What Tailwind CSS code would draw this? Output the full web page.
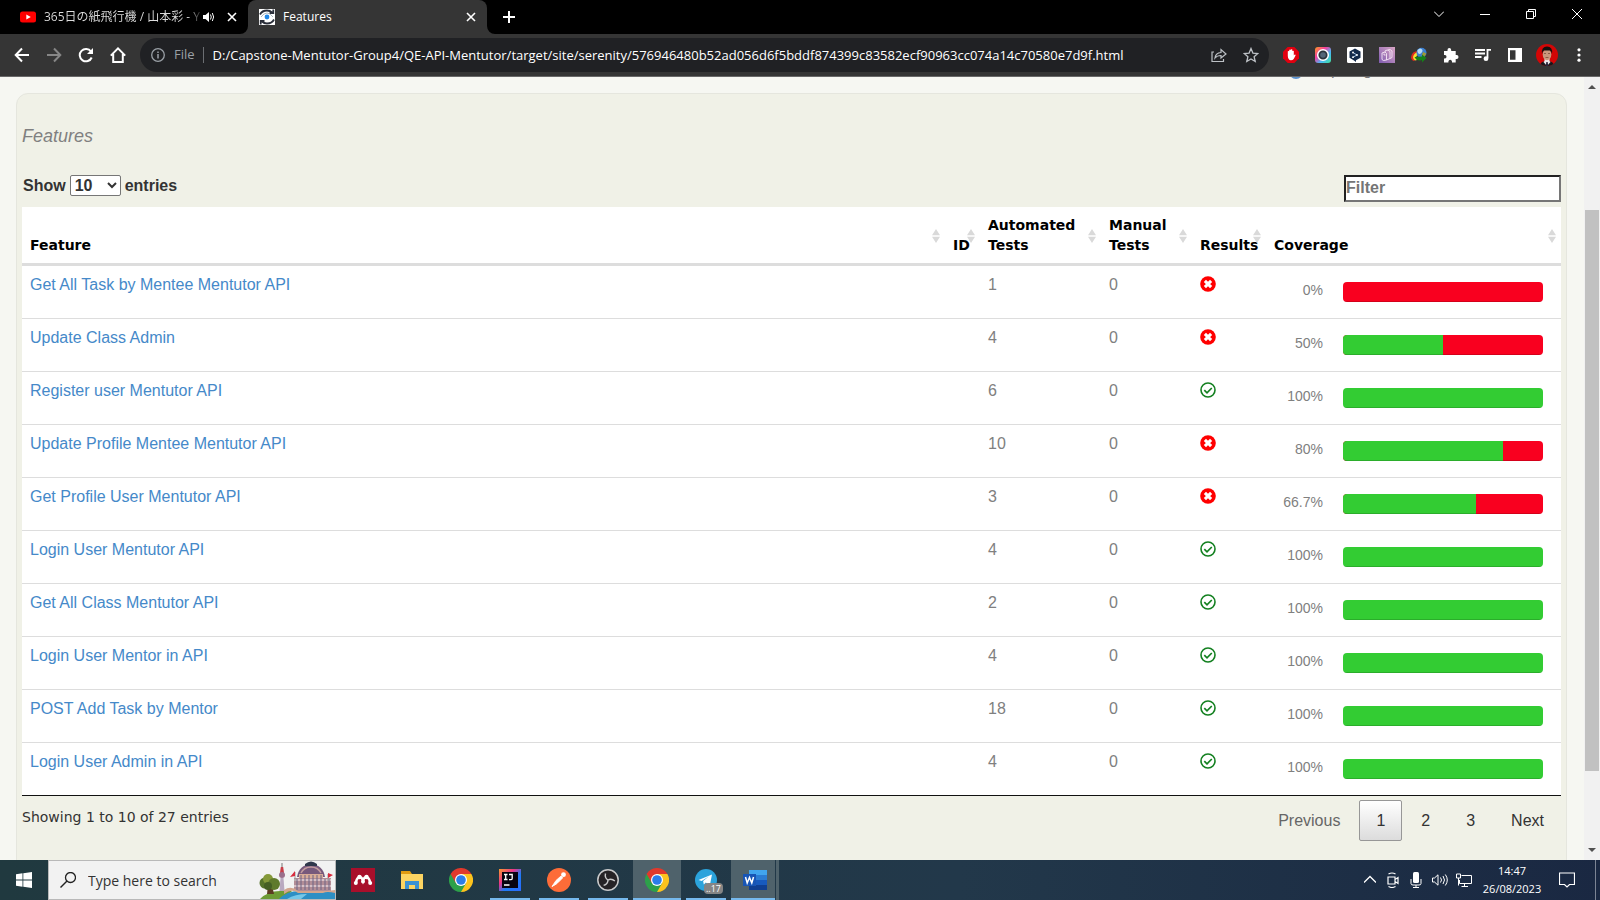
<!DOCTYPE html>
<html lang="en">
<head>
<meta charset="utf-8">
<title>Features</title>
<script src="https://cdn.jsdelivr.net/npm/@tailwindcss/browser@4"></script>
</head>
<body class="flex h-screen flex-col overflow-hidden bg-black font-['Open_Sans','Noto_Sans_CJK_JP',sans-serif]">

<svg class="hidden">
  <defs>
    <symbol id="fail" viewBox="0 0 16 16"><circle cx="8" cy="8" r="7.800" fill="#f00"/><path d="M4.900 4.900l6.200 6.200M11.100 4.900l-6.200 6.200" stroke="#fff" stroke-width="3.100"/></symbol>
    <symbol id="pass" viewBox="0 0 16 16"><circle cx="8" cy="8" r="7" fill="none" stroke="#138020" stroke-width="1.600"/><path d="M4.300 8.200l2.700 2.600 4.800-4.800" fill="none" stroke="#138020" stroke-width="1.700"/></symbol>
    <symbol id="sort" viewBox="0 0 8 14"><path d="M4 0l4 6.300H0zM4 14l4-6.300H0z" fill="#d9d9d9"/></symbol>
    <symbol id="close" viewBox="0 0 10 10"><path d="M1 1l8 8M9 1L1 9" stroke="currentColor" stroke-width="1.600" fill="none"/></symbol>
    <symbol id="chrome" viewBox="0 0 24 24">
      <path d="M12 24a12 12 0 0 0 10.400-18H12z" fill="#fcc31e"/>
      <path d="M17.200 15L12 24A12 12 0 0 1 1.600 6z" fill="#2da04a"/>
      <path d="M12 6H22.400A12 12 0 0 0 1.600 6l5.200 9z" fill="#e0392c"/>
      <circle cx="12" cy="12" r="6" fill="#fff"/><circle cx="12" cy="12" r="4.800" fill="#2b7de9"/>
    </symbol>
  </defs>
</svg>

<header class="shrink-0 text-white">
  <!-- Tab strip -->
  <div class="flex h-[34px] items-stretch bg-black text-xs">
    <div class="flex w-[248px] items-center bg-black pr-[11px] pl-5">
      <svg class="h-4 w-4 shrink-0" viewBox="0 0 16 16"><rect y="2.500" width="16" height="11" rx="2.500" fill="#f00"/><path d="M6.300 5.500v5L10.800 8z" fill="#fff"/></svg>
      <span class="ml-2 shrink-0 bg-linear-to-r from-[#dedede] from-92% to-[#333] bg-clip-text whitespace-nowrap text-transparent">365日の紙飛行機 / 山本彩 - Y</span>
      <svg class="mr-3 ml-auto h-3 w-3 shrink-0" viewBox="0 0 12 12"><path d="M0 4h2.500L6 1v10L2.500 8H0z" fill="#fff"/><path d="M7.500 3.500q1.500 2.500 0 5M9.300 2q2.600 4 0 8" stroke="#fff" fill="none"/></svg>
      <button aria-label="Close tab"><svg class="h-[10px] w-[10px]"><use href="#close"/></svg></button>
    </div>
    <div class="relative flex w-[239px] items-center rounded-t-lg bg-[#353535] pr-[11px] pl-[11px]">
      <svg class="absolute bottom-0 -left-2 h-2 w-2" viewBox="0 0 8 8"><path d="M8 0v8H0a8 8 0 0 0 8-8" fill="#353535"/></svg>
      <svg class="absolute -right-2 bottom-0 h-2 w-2" viewBox="0 0 8 8"><path d="M0 0v8h8a8 8 0 0 1-8-8" fill="#353535"/></svg>
      <svg class="h-4 w-4 shrink-0" viewBox="0 0 16 16"><path fill="#fff" d="M0 0h16v16H0z"/><path d="M1 5.500Q3 1.500 8 1.500q3 0 5 2M15 10.500Q13 14.500 8 14.500q-3 0-5-2M10.500 4h3.800V.5M5.500 12H1.700v3.500" fill="none" stroke="#2b2f3a" stroke-width="1.800"/><path d="M2 8q3-4 6-4t6 4" fill="none" stroke="#9aa4ad" stroke-width=".8"/><circle cx="8" cy="8" r="2.400" fill="#2389e8"/></svg>
      <span class="ml-2">Features</span>
      <button aria-label="Close tab" class="ml-auto"><svg class="h-[10px] w-[10px]"><use href="#close"/></svg></button>
    </div>
    <button aria-label="New tab" class="ml-4 flex items-center"><svg class="h-3 w-3" viewBox="0 0 12 12"><path d="M6 0v12M0 6h12" stroke="#fff" stroke-width="2"/></svg></button>
    <div class="ml-auto flex items-center gap-9 pr-[18px] pb-[6px]">
      <button aria-label="Search tabs"><svg class="h-[10px] w-[10px]" viewBox="0 0 10 10"><path d="M0 2.500l5 5 5-5" stroke="#fff" fill="none"/></svg></button>
      <button aria-label="Minimize"><svg class="h-[10px] w-[10px]" viewBox="0 0 10 10"><path d="M0 5.500h10" stroke="#fff"/></svg></button>
      <button aria-label="Restore"><svg class="h-[10px] w-[10px]" viewBox="0 0 10 10"><path d="M.5 2.500h7v7h-7zM2.500 2.500v-2h7v7h-2" stroke="#fff" fill="none"/></svg></button>
      <button aria-label="Close"><svg class="h-[10px] w-[10px]" viewBox="0 0 10 10"><path d="M0 0l10 10M10 0L0 10" stroke="#fff" fill="none"/></svg></button>
    </div>
  </div>

  <!-- Toolbar -->
  <div class="flex h-[43px] items-center border-b border-[#686868] bg-[#353535] pr-[13px] pl-[14px]">
    <div class="flex items-center gap-4">
      <button aria-label="Back"><svg class="h-4 w-4" viewBox="0 0 16 16"><path d="M15 8H2M8 1.500L1.700 8 8 14.500" stroke="#fff" stroke-width="2" fill="none"/></svg></button>
      <button aria-label="Forward"><svg class="h-4 w-4" viewBox="0 0 16 16"><path d="M1 8h13M8 1.500L14.300 8 8 14.500" stroke="#868686" stroke-width="2" fill="none"/></svg></button>
      <button aria-label="Reload"><svg class="h-4 w-4" viewBox="0 0 16 16"><path d="M13.700 10.500A6.200 6.200 0 1 1 13 4.500" stroke="#fff" stroke-width="2" fill="none"/><path d="M15 1v6H9z" fill="#fff"/></svg></button>
      <button aria-label="Home"><svg class="h-4 w-4" viewBox="0 0 16 16"><path d="M.8 8.600L8 1.400l7.200 7.200M3.200 7v8h9.600V7" stroke="#fff" stroke-width="2" fill="none"/></svg></button>
    </div>
    <div class="ml-[14px] flex h-[34px] min-w-0 flex-1 items-center rounded-full bg-[#202124] pr-[10px] pl-[11px] text-[13px]">
      <svg class="h-[14px] w-[14px] shrink-0" viewBox="0 0 14 14"><circle cx="7" cy="7" r="6.300" stroke="#9aa0a6" stroke-width="1.300" fill="none"/><path d="M7 6v4.500M7 3.500v1.500" stroke="#9aa0a6" stroke-width="1.500"/></svg>
      <span class="ml-[9px] text-[#9aa0a6]">File</span>
      <span class="ml-2 h-4 w-px bg-[#6b6e72]"></span>
      <input aria-label="Address" class="ml-[9px] min-w-0 flex-1 bg-transparent pt-px text-white outline-none" value="D:/Capstone-Mentutor-Group4/QE-API-Mentutor/target/site/serenity/576946480b52ad056d6f5bddf874399c83582ecf90963cc074a14c70580e7d9f.html">
      <button aria-label="Share" class="ml-2"><svg class="h-4 w-4" viewBox="0 0 16 16"><path d="M3 5H1v9.500h11.500V12M4 11q.5-5 6-5.500V2.500L15 7l-5 4V8.500Q6 8.500 4 11z" stroke="#bdc1c6" stroke-width="1.200" fill="none"/></svg></button>
      <button aria-label="Bookmark" class="ml-4"><svg class="h-4 w-4" viewBox="0 0 16 16"><path d="M8 1.500l1.900 4.600 4.900.4-3.700 3.200 1.100 4.800L8 12l-4.200 2.500 1.100-4.800L1.200 6.500l4.900-.4z" stroke="#bdc1c6" stroke-width="1.300" fill="none"/></svg></button>
    </div>
    <div class="ml-[14px] flex items-center gap-4">
      <svg class="h-4 w-4" viewBox="0 0 16 16"><path d="M4.700 0h6.600L16 4.700v6.600L11.300 16H4.700L0 11.300V4.700z" fill="#e2000f"/><path d="M4.800 9V4.300q.7-.8 1.400 0V3q.8-.8 1.600 0v-.4q.8-.7 1.500 0V4q.8-.7 1.500 0v4.500q.5-.8 1.300-.9.800.3.400 1-.8 1.700-1.800 3.400-.9 1.300-2.800 1.300Q5 13 4.800 9z" fill="#fff"/></svg>
      <svg class="h-4 w-4" viewBox="0 0 16 16"><defs><linearGradient id="cam" x1="0" y1="0" x2="1" y2="1"><stop offset="0" stop-color="#ff9d1c"/><stop offset=".35" stop-color="#f63da0"/><stop offset=".65" stop-color="#47b8f5"/><stop offset="1" stop-color="#42e69e"/></linearGradient></defs><rect width="16" height="16" rx="3" fill="url(#cam)"/><circle cx="8" cy="8" r="5.300" fill="#2c343e" stroke="#fff" stroke-width="1.500"/><circle cx="8" cy="8" r="2.800" fill="#536578"/></svg>
      <svg class="h-4 w-4" viewBox="0 0 16 16"><rect width="16" height="16" rx="1.500" fill="#fff"/><path d="M8 1.500l5.500 3v6.200L9 13.200V15l-2-1.500-4.500-2.800V4.500z" fill="#12294b"/><path d="M6 5.500L10 8 6 10.200" stroke="#9fc1e8" fill="none"/><circle cx="6" cy="5.500" r=".9" fill="#fff"/><circle cx="10" cy="8" r=".9" fill="#fff"/><circle cx="6" cy="10.200" r=".9" fill="#fff"/></svg>
      <svg class="h-4 w-4" viewBox="0 0 16 16"><defs><linearGradient id="pg" x1="0" y1="1" x2="1" y2="0"><stop offset="0" stop-color="#7f5bb0"/><stop offset="1" stop-color="#d8a5c5"/></linearGradient></defs><path fill="url(#pg)" d="M0 0h16v16H0z"/><path d="M3 12.500V6l3-1 1.500 1.500v6.500L4.500 13.500zM6 5l.500-1.500 2.500-.5L11 4.500v7L7.500 13M9 3l2-.5 2 1.500v6.500L11 11.500M5 6.500v1.500h1.500" fill="none" stroke="#f6e6f5" stroke-width=".9"/></svg>
      <svg class="h-4 w-4" viewBox="0 0 16 16"><path d="M0 10Q1 4 7 4v3Q4 8 5 12l-2 2Q0 13 0 10z" fill="#e22b1e"/><path d="M2 10q1-4 5-5v3q-3 1-1 5l-2 .5Q2 12 2 10z" fill="#f5e131"/><circle cx="10.500" cy="5.700" r="5" fill="#3b7fd0"/><path d="M6.500 3q3-3 5 0 0 3-3 4Q6 6 6.500 3z" fill="#b9dbf4"/><path d="M12 5l3.200 1.500-2 3.500-2.500-1z" fill="#a09a32"/><path d="M3.500 10l7.500-.5V7.500l4.500 3.500-4.500 4.500V13Q6 15 3.500 10z" fill="#168019"/></svg>
      <svg class="h-4 w-4" viewBox="0 0 16 16"><path d="M1 4h3.500V3Q4.500 1 6.300 1T8.200 3v1h4.500v4h1q1.800.2 1.800 2t-1.800 2h-1v3.500H9v-1q-.3-1.700-1.800-1.700T5.400 14.500v1H1V11.500h1q1.500-.3 1.500-1.800T2 8H1z" fill="#fff"/></svg>
      <svg class="h-4 w-4" viewBox="0 0 16 16"><path d="M0 3h10M0 6.500h10M0 10h6.500M12.500 11V2.800H16" stroke="#fff" stroke-width="1.800" fill="none"/><circle cx="11" cy="11.700" r="2.400" fill="#fff"/></svg>
      <svg class="h-4 w-4" viewBox="0 0 16 16"><path d="M1 1h14v14H1zM3 3.300v9.400h5.500V3.300z" fill="#fff" fill-rule="evenodd"/></svg>
      <svg class="-mx-[3px] h-[22px] w-[22px]" viewBox="0 0 22 22"><defs><clipPath id="av"><circle cx="11" cy="11" r="11"/></clipPath></defs><g clip-path="url(#av)"><path fill="#d30606" d="M0 0h22v22H0z"/><path d="M4 22q0-4 5-5h4q5 1 5 5z" fill="#17171c"/><path d="M8.500 14h5v3l1 1-3.500 4-3.500-4 1-1z" fill="#ece8ea"/><path d="M10.300 18h1.400l.5 4h-2.400z" fill="#26233a"/><ellipse cx="11" cy="10.500" rx="4.300" ry="5.700" fill="#c9977b"/><path d="M6 10Q5 2.500 11 2.500t5 7.500Q15.500 7 14 6.500H8Q6.500 7 6 10z" fill="#15110f"/><path d="M8 9.500h2M12 9.500h2M9.500 13.500h3" stroke="#7c4c38" stroke-width=".8"/></g></svg>
      <button aria-label="Menu"><svg class="h-4 w-4" viewBox="0 0 16 16"><circle cx="8" cy="2.800" r="1.600" fill="#fff"/><circle cx="8" cy="8" r="1.600" fill="#fff"/><circle cx="8" cy="13.200" r="1.600" fill="#fff"/></svg></button>
    </div>
  </div>
</header>

<div class="flex min-h-0 flex-1 bg-[#f6f7f2] font-['Liberation_Sans',Arial,sans-serif]">
  <main class="min-w-0 flex-1 overflow-hidden pr-[17px] pl-4">
    <div class="flex h-4 justify-end overflow-hidden pr-[132px]">
      <p class="-mt-[17px] flex h-5 items-start gap-[7px] leading-5 text-[#777]"><svg class="h-[19px] w-[14px]" viewBox="0 0 14 19"><circle cx="7" cy="12" r="7" fill="#5a92cf"/></svg>Report generated</p>
    </div>
    <section class="h-[1000px] rounded-xl border border-[#e5e6de] bg-[#f0f1e7] px-[5px] pt-8">
      <h2 class="text-lg leading-5 text-[#808080] italic">Features</h2>
      <div class="mt-[29px] flex h-8 items-start justify-between text-base leading-5 font-bold text-[#333]">
        <label class="flex items-center gap-1 pl-px">Show
          <select class="h-[21px] w-[51px] rounded-xs border border-[#767676] bg-white font-bold"><option>10</option><option>25</option></select>
          entries</label>
        <input type="search" aria-label="Filter" placeholder="Filter" class="h-[27px] w-[217px] border-2 border-t-[#222] border-r-[#767676] border-b-[#767676] border-l-[#222] bg-white pb-[2px] font-bold placeholder:text-[#757575]">
      </div>

      <table class="w-full table-fixed border-separate border-spacing-0 border-b border-[#111] bg-white text-left">
        <colgroup><col><col class="w-[35px]"><col class="w-[121px]"><col class="w-[91px]"><col class="w-[74px]"><col class="w-[295px]"></colgroup>
        <thead>
          <tr id="head" class="h-[59px] align-bottom font-['DejaVu_Sans',Verdana,sans-serif] text-sm leading-5 text-black"></tr>
        </thead>
        <tbody id="rows" class="text-base leading-5 text-[#808080]"></tbody>
      </table>

      <div class="flex items-start justify-between">
        <p class="mt-[11px] font-['DejaVu_Sans',Verdana,sans-serif] text-sm leading-5 text-[#333]">Showing 1 to 10 of 27 entries</p>
        <nav class="mt-1 flex gap-[2px] text-base text-[#333]">
          <button class="h-[41px] px-[17px] text-[#666]">Previous</button>
          <button class="h-[41px] rounded-xs border border-[#979797] bg-linear-to-b from-white to-[#dcdcdc] px-4">1</button>
          <button class="h-[41px] px-[17px]">2</button>
          <button class="h-[41px] px-[17px]">3</button>
          <button class="h-[41px] px-[17px]">Next</button>
        </nav>
      </div>
    </section>
  </main>
  <div class="flex w-4 flex-col items-center bg-[#f1f1f1] py-[6px]">
    <svg class="h-2 w-2" viewBox="0 0 8 8"><path d="M0 6l4-4 4 4z" fill="#505050"/></svg>
    <div class="flex w-full flex-1 flex-col items-center">
      <div class="grow-[119]"></div><div class="w-[14px] grow-[561] bg-[#c1c1c1]"></div><div class="grow-[75]"></div>
    </div>
    <svg class="h-2 w-2" viewBox="0 0 8 8"><path d="M0 2l4 4 4-4z" fill="#505050"/></svg>
  </div>
</div>

<!-- Taskbar -->
<footer class="flex h-10 shrink-0 items-stretch bg-linear-to-r from-[#20393f] via-[#22384a] via-60% to-[#1a2842] text-white">
  <button aria-label="Start" class="flex w-12 items-center justify-center"><svg class="h-4 w-4" viewBox="0 0 16 16"><path d="M0 2.200l6.500-.9v6.300H0zM7.300 1.200L16 0v7.600H7.300zM0 8.400h6.500v6.300L0 13.800zM7.300 8.400H16V16l-8.700-1.200z" fill="#fff"/></svg></button>
  <label class="flex w-72 items-center border border-[#b9b9b9] bg-[#f2f2f2] pl-[11px]">
    <svg class="h-4 w-4 shrink-0" viewBox="0 0 16 16"><circle cx="10.500" cy="5.500" r="5" stroke="#222" stroke-width="1.300" fill="none"/><path d="M7 9L.5 15.500" stroke="#222" stroke-width="1.400"/></svg>
    <input aria-label="Search" placeholder="Type here to search" class="ml-3 w-[171px] bg-transparent pt-px text-sm outline-none placeholder:text-[#333]">
    <svg class="h-[38px] w-[76px] shrink-0" viewBox="0 0 76 38">
      <path d="M1 38q8-8 20-8h12l-8 8z" fill="#6d9b35"/><path d="M20 38q8-8 20-8h36v8z" fill="#2d8fc4"/><path d="M28 38q8-5 20-5l-6 5z" fill="#76c7e8"/>
      <path d="M9 24h4l2 9H8z" fill="#5d3b22"/><circle cx="6" cy="22" r="5.500" fill="#56732a"/><circle cx="9" cy="18" r="5" fill="#85993a"/><circle cx="15" cy="23" r="6" fill="#5f7a2c"/><circle cx="9" cy="25" r="4" fill="#455f24"/>
      <path d="M23 2v8" stroke="#777"/><path d="M21.800 6h2.400l.8 6h-4z" fill="#c83d48"/><circle cx="23" cy="14" r="3" fill="#9b6f8c"/><path d="M21.500 17h3l1 13h-5z" fill="#b9a9c0"/>
      <path d="M35 30V17h37v13z" fill="#b28d96"/><path d="M38 16q2-12 14-13 12 1 14 13z" fill="#77597c"/><path d="M46 3q6-5 12 0v2H46z" fill="#30384c"/>
      <path d="M42 12q3-6 10-6t10 6" fill="none" stroke="#c39b9e" stroke-width="1.500"/><path d="M40 13h24v4H40z" fill="#d9ad98"/><path d="M35 19h37M35 25h37" stroke="#e5d1d5" stroke-width="1.500"/><path d="M38 18v11M42 14v15M46 14v15M50 14v15M54 14v15M58 14v15M62 14v15M66 18v11M70 18v11" stroke="#6d6484"/>
      <path d="M25 29q7-5 14 1h29l8-1v3q-8-2-12 0H39q-6-5-14 1z" fill="#d3a58d"/><path d="M36 20V11M69 20v-7" stroke="#999"/><path d="M36 10v5l-5 1zM69 12l5 2-5 3z" fill="#d92a3d"/>
    </svg>
  </label>
  <div class="flex">
    <button aria-label="Mendeley" class="flex w-[54px] items-center justify-center"><svg class="h-6 w-6" viewBox="0 0 24 24"><path fill="#a80f2b" d="M0 0h24v24H0z"/><path d="M5 15q0-4 3-6 3 0 4 3.500Q13 9 16 9q3 2 3 6" stroke="#fff" stroke-width="2.400" fill="none"/><circle cx="8.500" cy="9" r="2.200" fill="#fff"/><circle cx="15.500" cy="9" r="2.200" fill="#fff"/><circle cx="12" cy="13.500" r="2" fill="#fff"/><circle cx="4.800" cy="15" r="2" fill="#fff"/><circle cx="19.200" cy="15" r="2" fill="#fff"/></svg></button>
    <button aria-label="File Explorer" class="flex w-11 items-center justify-center"><svg class="h-5 w-6" viewBox="0 0 24 20"><path d="M1 1h9l2 3v5H1z" fill="#e09b12"/><path d="M1 4h22v15H1z" fill="#fcd462"/><path d="M5 19v-8h14v8h-4v-4H9v4z" fill="#3b92d3"/></svg></button>
    <button aria-label="Chrome" class="flex w-[54px] items-center justify-center"><svg class="h-6 w-6"><use href="#chrome"/></svg></button>
    <div class="flex gap-[9px] pl-[2px]">
      <button aria-label="IntelliJ IDEA" class="flex w-10 items-center justify-center border-b-2 border-[#76b9ed] pt-[2px]"><svg class="h-[22px] w-[22px]" viewBox="0 0 22 22"><defs><linearGradient id="ij" x1="0" y1="0" x2="1" y2="1"><stop offset="0" stop-color="#fa9b2d"/><stop offset=".35" stop-color="#ed3487"/><stop offset=".6" stop-color="#1f7cf5"/><stop offset="1" stop-color="#2b6bff"/></linearGradient></defs><path fill="url(#ij)" d="M0 0h22v22H0z"/><path fill="#080410" d="M3 3h16v16H3z"/><path d="M5 5.500h3.500M6.700 5.500v5M5 10.500h3.500M10 5.500h3.200v4q0 1.200-1.700 1.200H10M5 16h5.500" stroke="#fff" stroke-width="1.300" fill="none"/></svg></button>
      <button aria-label="Postman" class="flex w-10 items-center justify-center border-b-2 border-[#76b9ed] pt-[2px]"><svg class="h-6 w-6" viewBox="0 0 24 24"><circle cx="12" cy="12" r="12" fill="#fd6c38"/><path d="M5 18.500l4-6 5-4.500 1.800 1.800-5 5zM5 18.500l5-3" fill="#fff" stroke="#fff" stroke-width=".8"/><circle cx="16.500" cy="6.700" r="2.400" fill="#fff"/></svg></button>
      <button aria-label="OBS Studio" class="flex w-10 items-center justify-center border-b-2 border-[#76b9ed] pt-[2px]"><svg class="h-[22px] w-[22px]" viewBox="0 0 22 22"><circle cx="11" cy="11" r="10.200" fill="#252326" stroke="#c9cacb" stroke-width="1.500"/><g fill="none" stroke="#c9cacb" stroke-width="1.400"><path id="blade" d="M11 11Q7.500 9 8.500 4.500"/><use href="#blade" transform="rotate(120 11 11)"/><use href="#blade" transform="rotate(240 11 11)"/></g></svg></button>
    </div>
    <button aria-label="Chrome window" class="ml-[5px] flex w-12 items-center justify-center border-b-2 border-[#76b9ed] bg-[#4f626b] pt-[2px]"><svg class="h-6 w-6"><use href="#chrome"/></svg></button>
    <button aria-label="Telegram" class="relative ml-[5px] flex w-10 items-center justify-center border-b-2 border-[#76b9ed] pt-[2px]"><svg class="h-6 w-6" viewBox="0 0 24 24"><circle cx="12" cy="12" r="11" fill="#2ba3dc"/><path d="M4.500 12L18 6.500 15.800 17.500l-4-3-2 2-.7-3.500 6-4.800-7.500 4.800z" fill="#fff"/></svg><span class="absolute top-[23px] left-[18px] rounded-sm bg-[#858585] px-[2px] text-[9px] leading-[11px]">..17</span></button>
    <button aria-label="Word" class="ml-[5px] flex w-11 items-center justify-center border-b-2 border-[#76b9ed] bg-[#4f626b] pt-[2px] pl-1"><svg class="h-6 w-6" viewBox="0 0 24 24"><path d="M6 2h18v5H6z" fill="#41a5ee"/><path d="M6 7h18v5H6z" fill="#2b7cd3"/><path d="M6 12h18v5H6z" fill="#185abd"/><path d="M6 17h18v5H6z" fill="#103f91"/><path d="M0 6h13v12H0z" fill="#1855b5"/><path d="M2.500 9l1.700 6 2.300-5.500L8.800 15l1.700-6" stroke="#fff" stroke-width="1.500" fill="none"/></svg></button>
    <div class="ml-px w-[3px] bg-[#4f626b]"></div>
  </div>
  <div class="ml-auto flex items-center">
    <svg class="h-3 w-3" viewBox="0 0 12 12"><path d="M0 8.500l6-6 6 6" stroke="#fff" stroke-width="1.300" fill="none"/></svg>
    <svg class="ml-[9px] h-4 w-4" viewBox="0 0 16 16"><path d="M3 5h7v7H3zM10 7.500l3-2v6l-3-2M3.500 2Q7 0 10.500 2M3.500 14.500Q7 16.500 10.500 14.500" stroke="#fff" stroke-width="1.200" fill="none"/></svg>
    <svg class="ml-[7px] h-4 w-4" viewBox="0 0 16 16"><rect x="5" y="0" width="6" height="11" rx="1.500" fill="#fff"/><path d="M3 7v4.500q0 1.500 2 1.500h6q2 0 2-1.500V7M8 13v2.500M5 15.500h6" stroke="#fff" fill="none"/></svg>
    <svg class="ml-[8px] h-4 w-4" viewBox="0 0 16 16"><path d="M.5 6h2L6 2.800v10.400L2.500 10h-2zM8.500 5.500q2 2.500 0 5M11 4q3 4 0 8M13.300 2.500q4 5.500 0 11" stroke="#fff" fill="none"/></svg>
    <svg class="ml-[8px] h-4 w-4" viewBox="0 0 16 16"><path d="M5.500 3.500h10v8h-12V8M8.500 11.500v3M5.500 14.500h6.500M.5 2h4v4h-4zM2.500 6v7.500" stroke="#fff" fill="none"/></svg>
    <div class="ml-[9px] w-[62px] text-center text-[11px] leading-[18px] whitespace-nowrap"><div>14:47</div><div>26/08/2023</div></div>
    <svg class="ml-4 h-4 w-4" viewBox="0 0 16 16"><path d="M.5 1h15v11.500h-5L8 15l-2.500-2.500h-5z" stroke="#fff" stroke-width="1.200" fill="none"/></svg>
    <div class="ml-5 h-full w-[5px] border-l border-[#7c8494]"></div>
  </div>
</footer>

<script>
const heads = ['Feature', 'ID', 'Automated Tests', 'Manual Tests', 'Results', 'Coverage'];
document.getElementById('head').innerHTML = heads.map(h =>
  `<th class="relative border-b-[3px] border-[#ddd] p-2 font-bold">${h.replace(' ', '<br>')}<svg class="absolute top-[22px] right-[5px] h-[14px] w-2"><use href="#sort"/></svg></th>`).join('');
const data = [
  ['Get All Task by Mentee Mentutor API', 1, 0],
  ['Update Class Admin', 4, 50],
  ['Register user Mentutor API', 6, 100],
  ['Update Profile Mentee Mentutor API', 10, 80],
  ['Get Profile User Mentutor API', 3, 66.7],
  ['Login User Mentutor API', 4, 100],
  ['Get All Class Mentutor API', 2, 100],
  ['Login User Mentor in API', 4, 100],
  ['POST Add Task by Mentor', 18, 100],
  ['Login User Admin in API', 4, 100]
];
document.getElementById('rows').innerHTML = data.map(([name, tests, pct], i) => `
  <tr class="${i ? 'h-[53px] *:border-t *:border-[#ddd]' : 'h-[52px]'} align-top">
    <td class="px-2 pt-[9px]"><a href="#" class="text-[#4589c9]">${name}</a></td>
    <td></td>
    <td class="px-2 pt-[9px]">${tests}</td>
    <td class="px-2 pt-[9px]">0</td>
    <td class="px-2 pt-[10px]"><svg class="h-4 w-4" role="img" aria-label="${pct < 100 ? 'Failed' : 'Passed'}"><use href="${pct < 100 ? '#fail' : '#pass'}"/></svg></td>
    <td class="pt-4 pr-[18px]">
      <div class="flex">
        <span class="w-[57px] text-right text-sm leading-4">${pct}%</span>
        <div class="ml-5 flex h-5 flex-1 overflow-hidden rounded-sm bg-[#f9001f]">
          <div class="bg-[#33cc33] shadow-[inset_0_-1px_0_rgba(0,0,0,0.15)]" style="width:${pct}%"></div>
          <div class="flex-1 shadow-[inset_0_-1px_0_rgba(0,0,0,0.15)]"></div>
        </div>
      </div>
    </td>
  </tr>`).join('');
</script>
</body>
</html>
